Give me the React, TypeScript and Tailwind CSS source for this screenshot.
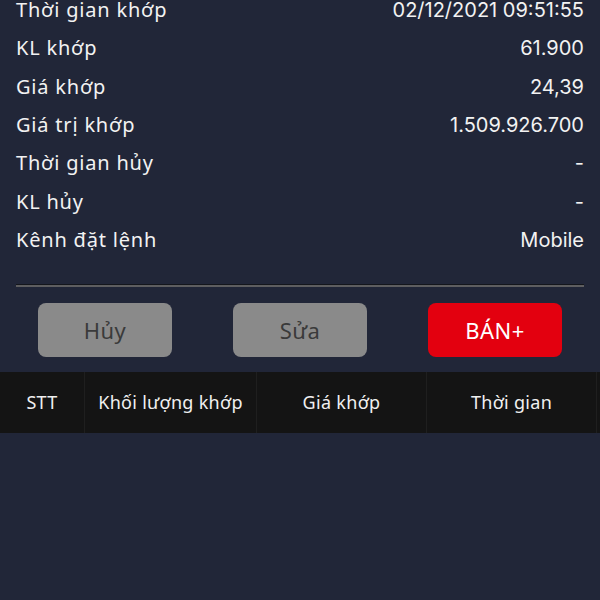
import React from "react";

const rows: [string, string][] = [
  ["Thời gian khớp", "02/12/2021 09:51:55"],
  ["KL khớp", "61.900"],
  ["Giá khớp", "24,39"],
  ["Giá trị khớp", "1.509.926.700"],
  ["Thời gian hủy", "-"],
  ["KL hủy", "-"],
  ["Kênh đặt lệnh", "Mobile"],
];

export default function App() {
  return (
    <div className="w-[600px] h-[600px] overflow-hidden bg-[#212638] text-white font-['Noto_Sans',sans-serif]">
      <div className="mt-[-9px] pl-4 pr-4">
        {rows.map(([l, v]) => (
          <div key={l} className="flex h-[38.3px] items-center justify-between">
            <span className="text-[20px] tracking-[0.8px] text-[#f2f2f2]">{l}</span>
            <span className="text-[20px] text-[#f2f2f2] font-['Inter',sans-serif]">{v}</span>
          </div>
        ))}
      </div>
      <div className="ml-4 mr-4 mt-[25px]">
        <div className="h-px bg-[#14161c]" />
        <div className="h-[2px] bg-[#5e5e60]" />
      </div>
      <div className="flex justify-between px-[38px] mt-[16px]">
        <button className="w-[134px] h-[54px] rounded-lg bg-[#8a8a8a] text-[#3a3a3a] text-[22px] tracking-[0.5px]">Hủy</button>
        <button className="w-[134px] h-[54px] rounded-lg bg-[#8a8a8a] text-[#3a3a3a] text-[22px] tracking-[0.5px]">Sửa</button>
        <button className="w-[134px] h-[54px] rounded-lg bg-[#e3000f] text-white text-[22px] tracking-[0.5px]">BÁN+</button>
      </div>
      <div className="mt-[15px] flex h-[61px] bg-[#141414] text-[18px] tracking-[0.3px] text-[#f0f0f0]">
        <div className="w-[85px] flex items-center justify-center border-r border-[#1f1f1f]">STT</div>
        <div className="w-[172px] flex items-center justify-center border-r border-[#1f1f1f]">Khối lượng khớp</div>
        <div className="w-[170px] flex items-center justify-center border-r border-[#1f1f1f]">Giá khớp</div>
        <div className="w-[170px] flex items-center justify-center border-r border-[#1f1f1f]">Thời gian</div>
      </div>
    </div>
  );
}
